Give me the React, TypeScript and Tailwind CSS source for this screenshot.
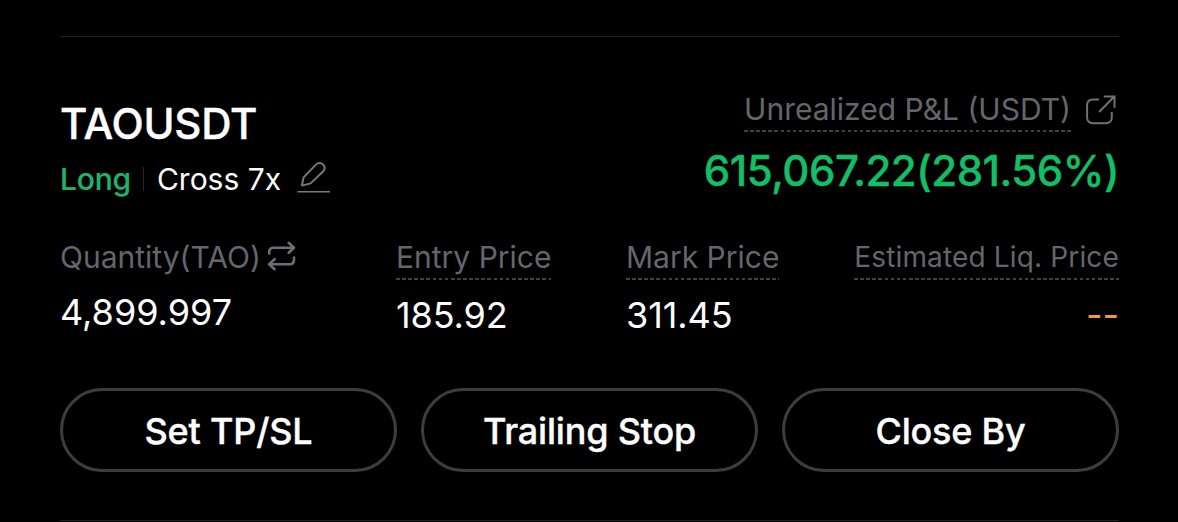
import type { ReactNode } from "react";

const dashes =
  "h-[2px] bg-[repeating-linear-gradient(to_right,#414143_0px,#414143_3.6px,transparent_3.6px,transparent_6.1px)]";

function Label({ children, className }: { children: ReactNode; className: string }) {
  return (
    <div className="flex flex-col">
      <span className={`whitespace-nowrap text-[#65666b] ${className}`}>{children}</span>
      <span className={dashes} />
    </div>
  );
}

function ActionButton({ children }: { children: ReactNode }) {
  return (
    <button className="flex h-[84px] flex-1 items-center justify-center rounded-full border-[3px] border-[#3d3d3f] pt-px text-[36px] font-medium tracking-[-0.2px] whitespace-nowrap [-webkit-text-stroke:0.4px_#fdfdfd]">
      {children}
    </button>
  );
}

function PencilIcon() {
  return (
    <svg width="34" height="34" viewBox="0 0 34 34" fill="none" stroke="#77787a" className="block">
      <path
        d="M4.9 25.6 L6.6 17.4 L18.9 4.6 Q21.8 1.8 25.4 4 Q29.2 6.8 26.6 11 L13.6 23.4 Z"
        strokeWidth="2"
        strokeLinejoin="round"
      />
      <path d="M0.5 31.7 H33" strokeWidth="1.6" />
    </svg>
  );
}

function ExternalIcon() {
  return (
    <svg width="32" height="32" viewBox="0 0 32 32" fill="none" stroke="#707174" strokeWidth="2" className="block">
      <path d="M14 5.4 H8 Q2.1 5.4 2.1 11 V23.6 Q2.1 29.2 8 29.2 H21 Q26.8 29.2 26.8 23.6 V18" />
      <path d="M14.2 18 L29 2.8 M18.8 2.4 H29.5 V13.7" />
    </svg>
  );
}

function SwapIcon() {
  return (
    <svg
      width="30"
      height="30"
      viewBox="0 0 30 30"
      fill="none"
      stroke="#6d6e71"
      strokeWidth="2.6"
      strokeLinecap="round"
      strokeLinejoin="round"
      className="block"
    >
      <path d="M2.2 12.5 V11 Q2.2 6.8 6.5 6.8 H26.6 M21.7 1.8 L27 6.8 L21.7 11.8" />
      <path d="M27 16.5 V18.5 Q27 23.2 22.7 23.2 H2.5 M7.6 18.2 L2.1 23.2 L7.6 28.2" />
    </svg>
  );
}

export default function App() {
  return (
    <main className="h-[522px] w-[1178px] overflow-hidden bg-black px-[60px] pt-9 font-['Inter',sans-serif] text-[#fdfdfd]">
      <div className="mr-[-1px] flex h-[485px] flex-col border-y border-[#232325]">
        <header className="flex justify-between pt-[52px]">
          <div className="pt-2">
            <h1 className="h-[54px] text-[42px] leading-[54px] font-medium tracking-[-0.25px] [-webkit-text-stroke:0.4px_#fdfdfd]">
              TAOUSDT
            </h1>
            <div className="flex h-[56px] items-center">
              <span className="text-[30px] leading-10 font-medium tracking-[-0.2px] text-[#20b26c] [-webkit-text-stroke:0.2px_#20b26c]">
                Long
              </span>
              <span className="ml-3 h-6 w-px bg-[#252527]" />
              <span className="ml-[13px] text-[30px] leading-10">Cross 7x</span>
              <span className="mb-[5px] ml-4">
                <PencilIcon />
              </span>
            </div>
          </div>
          <div className="flex flex-col items-end">
            <div className="mr-[2px] flex gap-[14px]">
              <Label className="h-[41px] text-[30px] leading-[41px]">Unrealized P&amp;L (USDT)</Label>
              <div className="pt-[5px]">
                <ExternalIcon />
              </div>
            </div>
            <strong className="mt-[13px] text-[42px] leading-[52px] font-medium tracking-[-0.48px] text-[#12bf67] [-webkit-text-stroke:0.4px_#12bf67]">
              615,067.22(281.56%)
            </strong>
          </div>
        </header>

        <section className="mt-[29px] flex h-[110px]">
          <div className="w-[336px]">
            <div className="flex gap-[6px]">
              <span className="text-[30px] leading-[42px] whitespace-nowrap text-[#65666b]">Quantity(TAO)</span>
              <div className="pt-[5px]">
                <SwapIcon />
              </div>
            </div>
            <div className="mt-[11px] text-[36px] leading-[46px]">4,899.997</div>
          </div>
          <div className="flex w-[230px] flex-col items-start">
            <Label className="h-[42px] text-[30px] leading-[42px]">Entry Price</Label>
            <div className="mt-3 text-[36px] leading-[46px] tracking-[-0.1px]">185.92</div>
          </div>
          <div className="flex flex-col items-start">
            <Label className="h-[42px] text-[30px] leading-[42px]">Mark Price</Label>
            <div className="mt-3 text-[36px] leading-[46px] tracking-[-0.1px]">311.45</div>
          </div>
          <div className="ml-auto flex flex-col items-end">
            <Label className="h-[42px] text-[28px] leading-[42px] tracking-[0.15px]">Estimated Liq. Price</Label>
            <div className="mt-3 text-[36px] leading-[46px] text-[#f79a35]">--</div>
          </div>
        </section>

        <footer className="mt-auto mb-12 flex gap-6">
          <ActionButton>Set TP/SL</ActionButton>
          <ActionButton>Trailing Stop</ActionButton>
          <ActionButton>Close By</ActionButton>
        </footer>
      </div>
    </main>
  );
}
